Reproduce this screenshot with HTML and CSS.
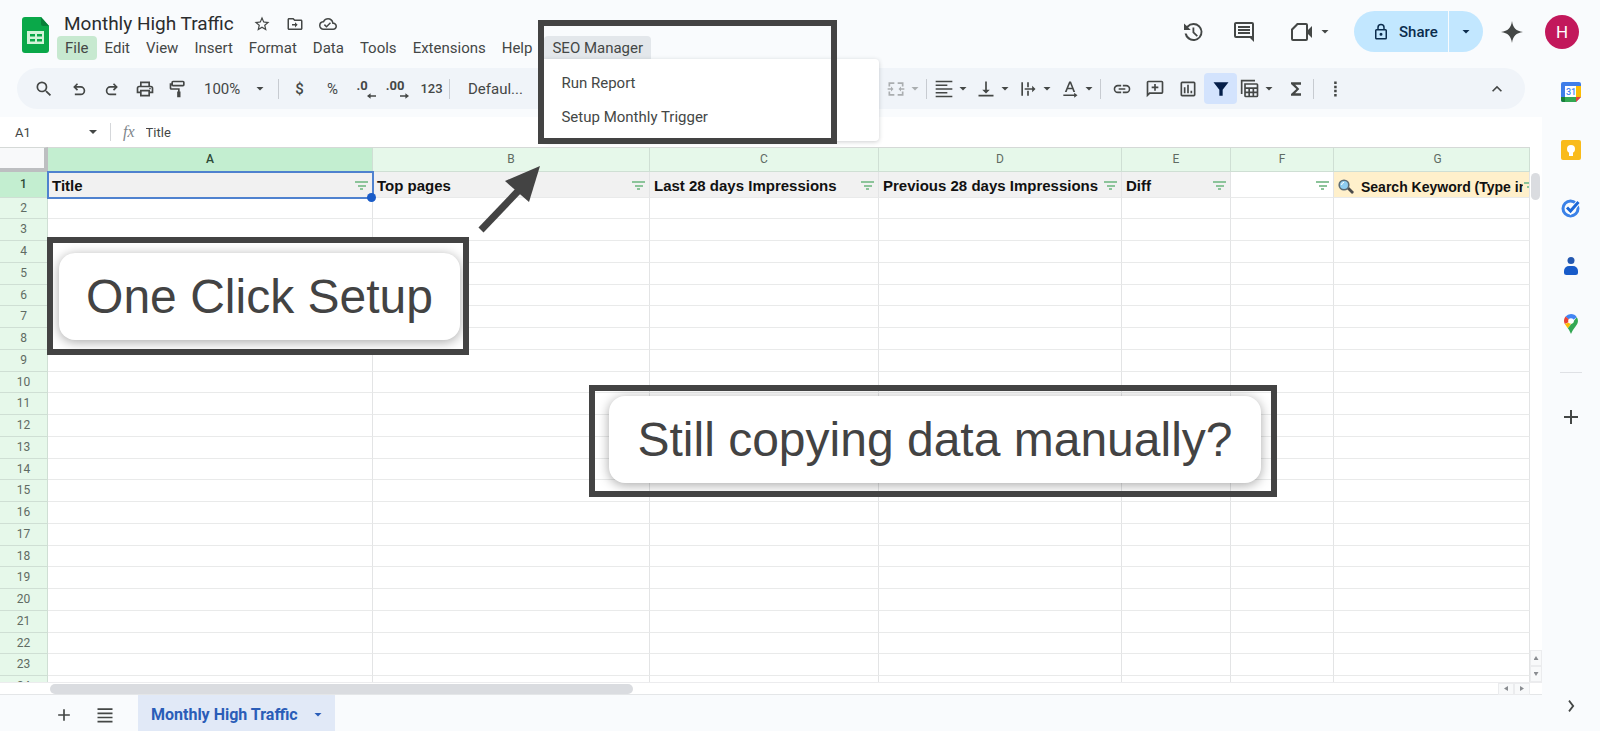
FILE: index.html
```html
<!DOCTYPE html>
<html lang="en">
<head>
    <meta charset="UTF-8">
    <meta name="viewport" content="width=device-width, initial-scale=1.0">
    <title>Monthly High Traffic</title>
    <link rel="stylesheet" href="styles.css">
</head>
<body>
    <div class="app">
        <header class="header">
            <svg class="logo" viewBox="0 0 27 36">
                <path d="M3 0h16l8 9v24a3 3 0 0 1-3 3H3a3 3 0 0 1-3-3V3a3 3 0 0 1 3-3z" fill="#0aa849"/>
                <path d="M19 0l8 9h-6a2 2 0 0 1-2-2z" fill="#078038"/>
                <path d="M5 14h17v13H5z" fill="#d3f3d8"/>
                <path d="M8 17h5v2.500H8zM15 17h5v2.500h-5zM8 22h5v2.500H8zM15 22h5v2.500h-5z" fill="#0aa849"/>
            </svg>
            <div class="heading">
                <div class="title-row">
                    <h1>Monthly High Traffic</h1>
                    <button aria-label="Star"><svg viewBox="0 0 24 24"><path d="M22 9.240l-7.190-.620L12 2 9.190 8.630 2 9.240l5.460 4.730L5.820 21 12 17.270 18.180 21l-1.630-7.030L22 9.240zM12 15.400l-3.760 2.270 1-4.280-3.320-2.880 4.380-.380L12 6.100l1.710 4.040 4.380.380-3.320 2.880 1 4.280L12 15.400z"/></svg></button>
                    <button aria-label="Move"><svg viewBox="0 0 24 24"><path d="M20 6h-8l-2-2H4c-1.100 0-2 .9-2 2v12c0 1.100.9 2 2 2h16c1.100 0 2-.9 2-2V8c0-1.100-.9-2-2-2zm0 12H4V6h5.170l2 2H20v10zM12 9.500l3.500 3.500-3.500 3.500v-2.500H8v-2h4z"/></svg></button>
                    <button aria-label="Saved"><svg viewBox="0 0 24 24"><path d="M19.350 10.040A7.490 7.490 0 0 0 12 4C9.110 4 6.600 5.640 5.350 8.040A5.994 5.994 0 0 0 0 14c0 3.310 2.690 6 6 6h13c2.760 0 5-2.240 5-5 0-2.640-2.050-4.780-4.650-4.960zM19 18H6c-2.210 0-4-1.790-4-4 0-2.050 1.530-3.760 3.560-3.970l1.070-.110.5-.950A5.469 5.469 0 0 1 12 6c2.620 0 4.880 1.860 5.390 4.430l.3 1.500 1.530.110A2.980 2.980 0 0 1 22 15c0 1.650-1.350 3-3 3zm-9-3.820l-2.090-2.090L6.500 13.500 10 17l6.010-6.010-1.410-1.410z"/></svg></button>
                </div>
                <nav class="menubar">
                    <button class="active">File</button>
                    <button>Edit</button>
                    <button>View</button>
                    <button>Insert</button>
                    <button>Format</button>
                    <button>Data</button>
                    <button>Tools</button>
                    <button>Extensions</button>
                    <button>Help</button>
                    <div class="menu-wrap">
                        <button class="open">SEO Manager</button>
                        <div class="menu">
                            <button>Run Report</button>
                            <button>Setup Monthly Trigger</button>
                        </div>
                        <div class="frame frame-menu"></div>
                    </div>
                </nav>
            </div>
            <div class="actions">
                <button aria-label="History"><svg viewBox="0 0 24 24"><path d="M12.500 3a9 9 0 1 1-8.900 10.500h2.100A7 7 0 1 0 7.200 7.500L9.500 9.800V10H3V3.500L5.800 6.100A9 9 0 0 1 12.500 3zM11.500 7.500h1.800v4.600l3.600 3.400-1.200 1.300-4.200-4z"/></svg></button>
                <button class="comments" aria-label="Comments"><svg viewBox="0 0 24 24"><path d="M22 22l-4-4H4a2 2 0 0 1-2-2V4c0-1.100.9-2 2-2h16a2 2 0 0 1 2 2zM4 4v12h16V4zM6 6h12v2H6zM6 9h12v2H6zM6 12h12v2H6z"/></svg></button>
                <button class="meet" aria-label="Meet">
                    <svg viewBox="0 0 24 24"><path d="M7 3h9a2 2 0 0 1 2 2v5l4-4v12l-4-4v5a2 2 0 0 1-2 2H3a2 2 0 0 1-2-2V9zM8 5L3 10v9h13V5z"/></svg>
                    <i class="caret"></i>
                </button>
                <div class="share">
                    <button class="share-main"><svg viewBox="0 0 24 24"><path d="M18 8h-1V6A5 5 0 0 0 7 6v2H6a2 2 0 0 0-2 2v10c0 1.100.9 2 2 2h12a2 2 0 0 0 2-2V10a2 2 0 0 0-2-2zM9 6a3 3 0 0 1 6 0v2H9zM18 20H6V10h12zM12 17a2 2 0 1 0 0-4 2 2 0 0 0 0 4z"/></svg>Share</button>
                    <button class="share-more" aria-label="Share options"><i class="caret"></i></button>
                </div>
                <button class="spark" aria-label="Gemini"><svg viewBox="0 0 24 24"><path d="M12 1c1 7 4 10 11 11-7 1-10 4-11 11-1-7-4-10-11-11 7-1 10-4 11-11z"/></svg></button>
                <button class="avatar">H</button>
            </div>
        </header>

        <div class="main">
            <div class="workspace">
                <div class="toolbar">
                    <button class="tool search" aria-label="Search"><svg viewBox="0 0 24 24"><path d="M15.500 14h-.790l-.280-.270A6.471 6.471 0 0 0 16 9.500 6.500 6.500 0 1 0 9.500 16c1.610 0 3.090-.590 4.230-1.570l.270.280v.790l5 4.990L20.490 19l-4.990-5zm-6 0C7.010 14 5 11.990 5 9.500S7.010 5 9.500 5 14 7.010 14 9.500 11.990 14 9.500 14z"/></svg></button>
                    <button class="tool" aria-label="Undo"><svg viewBox="0 0 24 24"><path d="M9.500 5L5 9.500 9.500 14l1.400-1.400-2.100-2.100H14a3.500 3.500 0 0 1 0 7H7v2h7a5.500 5.500 0 0 0 0-11H8.800l2.100-2.100z"/></svg></button>
                    <button class="tool" aria-label="Redo"><svg viewBox="0 0 24 24"><path d="M14.500 5L19 9.500 14.500 14l-1.400-1.400 2.100-2.100H10a3.500 3.500 0 0 0 0 7h7v2h-7a5.500 5.500 0 0 1 0-11h5.200l-2.100-2.100z"/></svg></button>
                    <button class="tool" aria-label="Print"><svg viewBox="0 0 24 24"><path d="M19 8h-1V3H6v5H5a3 3 0 0 0-3 3v6h4v4h12v-4h4v-6a3 3 0 0 0-3-3zM8 5h8v3H8zm8 14H8v-4h8zm4-4h-2v-2H6v2H4v-4a1 1 0 0 1 1-1h14a1 1 0 0 1 1 1z"/><circle cx="18" cy="11.500" r="1"/></svg></button>
                    <button class="tool" aria-label="Paint format"><svg viewBox="0 0 24 24"><path d="M18 2H6a2 2 0 0 0-2 2v3c0 1.100.9 2 2 2h12a2 2 0 0 0 2-2V4a2 2 0 0 0-2-2zm0 5H6V4h12zM4 5v0H2v6a2 2 0 0 0 2 2h8v2h-1v7h4v-7h-1v-4H4z"/></svg></button>
                    <button class="tool zoom">100%<i class="caret"></i></button>
                    <span class="sep"></span>
                    <button class="tool money">$</button>
                    <button class="tool">%</button>
                    <button class="tool decimal">.0<svg viewBox="0 0 10 6"><path d="M10 2.250H4V0L0 3l4 3V3.750h6z"/></svg></button>
                    <button class="tool decimal">.00<svg viewBox="0 0 10 6"><path d="M0 2.250h6V0l4 3-4 3V3.750H0z"/></svg></button>
                    <button class="tool number">123</button>
                    <span class="sep"></span>
                    <button class="tool font">Defaul...</button>
                    <div class="tools-right">
                        <button class="tool split disabled" aria-label="Merge"><svg viewBox="0 0 24 24"><path d="M3 4h7v2H5v3H3zM14 4h7v5h-2V6h-5zM3 15h2v3h5v2H3zM19 15h2v5h-7v-2h5zM2 11h4V9l3 3-3 3v-2H2zM22 11h-4V9l-3 3 3 3v-2h4z"/></svg><i class="caret"></i></button>
                        <span class="sep"></span>
                        <button class="tool split" aria-label="Align"><svg viewBox="0 0 24 24"><path d="M2 2h20v2H2zM2 6.500h14v2H2zM2 11h20v2H2zM2 15.500h14v2H2zM2 20h20v2H2z"/></svg><i class="caret"></i></button>
                        <button class="tool split" aria-label="Vertical align"><svg viewBox="0 0 24 24"><path d="M11 3h2v10h3.500L12 17.500 7.500 13H11zM3 19h18v2H3z"/></svg><i class="caret"></i></button>
                        <button class="tool split" aria-label="Wrap"><svg viewBox="0 0 24 24"><path d="M4 4h2v16H4zM11 4h2v6h-2zM11 14h2v6h-2zM8 11h9V8l4 4-4 4v-3H8z"/></svg><i class="caret"></i></button>
                        <button class="tool split" aria-label="Rotate"><svg viewBox="0 0 24 24"><path d="M11 3h2.200l5 12.500h-2.200l-1.200-3.200H9.200L8 15.500H5.800zm1.100 2.300L9.900 10.500h4.300zM4 18.500h13v-2l4 3-4 3v-2H4z"/></svg><i class="caret"></i></button>
                        <span class="sep"></span>
                        <button class="tool" aria-label="Link"><svg viewBox="0 0 24 24"><path d="M3.900 12c0-1.710 1.390-3.100 3.100-3.100h4V7H7a5 5 0 0 0 0 10h4v-1.900H7A3.100 3.100 0 0 1 3.900 12zM8 13h8v-2H8zm9-6h-4v1.900h4a3.100 3.100 0 0 1 0 6.200h-4V17h4a5 5 0 0 0 0-10z"/></svg></button>
                        <button class="tool" aria-label="Comment"><svg viewBox="0 0 24 24"><path d="M2 22V4c0-1.100.9-2 2-2h16a2 2 0 0 1 2 2v12a2 2 0 0 1-2 2H6zM4 17l1-1h15V4H4zM11 6h2v3h3v2h-3v3h-2v-3H8V9h3z"/></svg></button>
                        <button class="tool" aria-label="Chart"><svg viewBox="0 0 24 24"><path d="M19 3H5a2 2 0 0 0-2 2v14c0 1.100.9 2 2 2h14a2 2 0 0 0 2-2V5a2 2 0 0 0-2-2zm0 16H5V5h14zM7 10h2v7H7zM11 7h2v10h-2zM15 14h2v3h-2z"/></svg></button>
                        <button class="tool on" aria-label="Filter"><svg viewBox="0 0 24 24"><path d="M3 4h18l-7 9v7h-4v-7z"/></svg></button>
                        <button class="tool split" aria-label="Views"><svg viewBox="0 0 24 24"><path fill-rule="evenodd" d="M1 1h17v2H3v15H1zM5 5h15a2 2 0 0 1 2 2v13a2 2 0 0 1-2 2H7a2 2 0 0 1-2-2zm2 2v3h13V7zm0 5v3h3v-3zm5 0v3h3v-3zm5 0v3h3v-3zM7 17v3h3v-3zm5 0v3h3v-3zm5 0v3h3v-3z"/></svg><i class="caret"></i></button>
                        <button class="tool" aria-label="Functions"><svg viewBox="0 0 24 24"><path d="M18 4H6v2l6.500 6L6 18v2h12v-3h-7l5-5-5-5h7z"/></svg></button>
                        <span class="sep"></span>
                        <button class="tool" aria-label="More"><svg viewBox="0 0 24 24"><path d="M11 3h3v3h-3zM11 8h3v3h-3zM11 13h3v3h-3zM11 18h3v3h-3z"/></svg></button>
                    </div>
                    <button class="tool collapse" aria-label="Hide menus"><svg viewBox="0 0 24 24"><path d="M12 8l-6 6 1.400 1.400L12 10.800l4.600 4.600L18 14z"/></svg></button>
                </div>

                <div class="formula-bar">
                    <button class="name-box">A1<i class="caret"></i></button>
                    <span class="fx">fx</span>
                    <input class="formula" type="text" value="Title" aria-label="Formula">
                </div>

                <div class="sheet">
                    <div class="grid">
                        <table>
                            <colgroup>
                                <col class="col-num"><col class="col-a"><col class="col-b"><col class="col-c"><col class="col-d"><col class="col-e"><col class="col-f"><col>
                            </colgroup>
                            <thead>
                                <tr><th class="corner"></th><th class="current">A</th><th>B</th><th>C</th><th>D</th><th>E</th><th>F</th><th class="last">G</th></tr>
                            </thead>
                            <tbody id="rows">
                                <tr class="titles">
                                    <th class="current">1</th>
                                    <td class="selected"><div>Title<i class="filter"></i></div></td>
                                    <td><div>Top pages<i class="filter"></i></div></td>
                                    <td><div>Last 28 days Impressions<i class="filter"></i></div></td>
                                    <td><div>Previous 28 days Impressions<i class="filter"></i></div></td>
                                    <td><div>Diff<i class="filter"></i></div></td>
                                    <td class="blank"><div><i class="filter"></i></div></td>
                                    <td class="keyword"><div>
                                        <svg viewBox="0 0 16 16"><path d="M9 10l2-2 4.500 4.500a1.500 1.500 0 0 1-2 2z" fill="#4a4a4a"/><circle cx="6" cy="6" r="4.800" fill="#8fcdf0" stroke="#5b6b75" stroke-width="1.600"/><path d="M3.500 6A3 3 0 0 1 6 3.300" stroke="#fff" fill="none"/></svg>
                                        <span>Search Keyword (Type in</span><i class="filter"></i></div></td>
                                </tr>
                            </tbody>
                        </table>
                    </div>
                    <div class="vscroll">
                        <div class="vthumb"></div>
                        <button class="up" aria-label="Scroll up"></button>
                        <button class="down" aria-label="Scroll down"></button>
                    </div>
                    <div class="hscroll">
                        <div class="hthumb"></div>
                        <button class="left" aria-label="Scroll left"></button>
                        <button class="right" aria-label="Scroll right"></button>
                    </div>

                    <!-- callouts over the sheet -->
                    <div class="frame callout callout-setup"><p>One Click Setup</p></div>
                    <div class="frame callout callout-copy"><p>Still copying data manually?</p></div>
                    <svg class="arrow" viewBox="0 0 64 70"><path d="M4 66L44 24" stroke="#434343" stroke-width="7"/><path d="M63 2L28 17l24 21z" fill="#434343"/></svg>
                </div>

                <footer class="tabs">
                    <button class="add" aria-label="Add sheet"><svg viewBox="0 0 24 24"><path d="M11 5h2v6h6v2h-6v6h-2v-6H5v-2h6z"/></svg></button>
                    <button class="all" aria-label="All sheets"><svg viewBox="0 0 24 24"><path d="M3 4h18v2H3zM3 9h18v2H3zM3 14h18v2H3zM3 19h18v2H3z"/></svg></button>
                    <button class="tab">Monthly High Traffic<i class="caret"></i></button>
                </footer>
            </div>

            <aside class="side">
                <button aria-label="Calendar"><svg viewBox="0 0 20 20"><path d="M2 0h16a2 2 0 0 1 2 2v13l-5 5H2a2 2 0 0 1-2-2V2a2 2 0 0 1 2-2z" fill="#3f7de8"/><path d="M15 4h5v11h-5z" fill="#fbbc04"/><path d="M4 15h11v5H4z" fill="#34a853"/><path d="M0 15h4v5H2a2 2 0 0 1-2-2z" fill="#188038"/><path d="M15 15h5l-5 5z" fill="#ea4335"/><path d="M4 4h11v11H4z" fill="#fff"/><text class="cal-day" x="5" y="13">31</text></svg></button>
                <button aria-label="Keep"><svg viewBox="0 0 20 20"><rect width="20" height="20" rx="2" fill="#f9bb1b"/><circle cx="10" cy="9" r="4" fill="#fff"/><path d="M8 12h4v4H8z" fill="#fff"/></svg></button>
                <button aria-label="Tasks"><svg viewBox="0 0 20 20"><circle cx="9.500" cy="10.500" r="7.500" fill="none" stroke="#3b82e8" stroke-width="3"/><path d="M6 10l3.500 3.500L17.500 4" fill="none" stroke="#fff" stroke-width="5"/><path d="M6 9.500l3.500 3.500L17.500 4" fill="none" stroke="#1c68d8" stroke-width="3"/></svg></button>
                <button aria-label="Contacts"><svg viewBox="0 0 20 20"><circle cx="10" cy="4.500" r="3.500" fill="#2458b0"/><path d="M3 15a5 5 0 0 1 5-5h4a5 5 0 0 1 5 5v1.500a2.500 2.500 0 0 1-2.500 2.500h-9A2.500 2.500 0 0 1 3 16.500z" fill="#185bc9"/></svg></button>
                <button aria-label="Maps"><svg viewBox="0 0 20 20"><path d="M10 0a7 7 0 0 0-5.400 2.500L10 7.500l5.800-4.300A7 7 0 0 0 10 0z" fill="#4285f4"/><path d="M4.600 2.500A7 7 0 0 0 3.800 10L10 7z" fill="#ea4335"/><path d="M3.800 10c.8 1.500 1.900 2.700 3 4.200L12 7z" fill="#fbbc04"/><path d="M15.800 3.200c2.500 4.300.5 7-2 10.200-1.600 2-2.700 4-3.800 6.600-.9-2.200-1.800-4-3.200-5.800z" fill="#34a853"/><circle cx="10" cy="7" r="2.800" fill="#fff"/></svg></button>
                <hr>
                <button aria-label="Add-ons"><svg viewBox="0 0 20 20"><path d="M9 3h2v6h6v2h-6v6H9v-6H3V9h6z"/></svg></button>
                <button class="hide" aria-label="Hide side panel"><svg viewBox="0 0 24 24"><path d="M8 5l2-2 7 9-7 9-2-2 5.500-7z"/></svg></button>
            </aside>
        </div>
    </div>

    <script>
        // empty rows below the title row
        const rows = document.getElementById('rows');
        for (let i = 2; i <= 24; i++) {
            const tr = document.createElement('tr');
            tr.innerHTML = `<th>${i}</th>` + '<td></td>'.repeat(7);
            rows.appendChild(tr);
        }
    </script>
</body>
</html>
```
FILE: styles.css
```css
* {
    box-sizing: border-box;
}
body {
    margin: 0;
    font-family: Roboto, "Liberation Sans", sans-serif;
    font-size: 15px;
    color: #444746;
    background: #f9fbfd;
}
button {
    font: inherit;
    color: inherit;
    background: none;
    border: none;
    padding: 0;
    cursor: pointer;
}
svg {
    display: block;
    fill: currentColor;
}
.app {
    display: flex;
    flex-direction: column;
    height: 100vh;
    overflow: hidden;
}
.caret {
    flex: none;
    width: 8px;
    height: 4px;
    background: currentColor;
    clip-path: polygon(0 0, 100% 0, 50% 100%);
}

/* header */
.header {
    display: flex;
    align-items: flex-start;
    height: 68px;
    flex: none;
    padding: 11px 21px 0 22px;
}
.logo {
    width: 27px;
    height: 36px;
    margin-top: 6px;
}
.heading {
    margin-left: 8px;
}
.title-row {
    display: flex;
    align-items: center;
    gap: 13px;
    height: 25px;
    padding-left: 7px;
}
.title-row h1 {
    margin: 0 5px 0 0;
    font-size: 19px;
    line-height: 24px;
    font-weight: 400;
    color: #2b2d2e;
}
.title-row svg {
    width: 20px;
    height: 18px;
}
.menubar {
    display: flex;
}
.menubar button {
    height: 24px;
    padding: 0 8px;
    border-radius: 4px;
    line-height: 24px;
    white-space: nowrap;
}
.menubar .active {
    background: #c7e9d0;
}
.menu-wrap {
    position: relative;
    margin-left: 4px;
}
.menubar .open {
    background: #e3e7eb;
    border-radius: 4px 4px 0 0;
}
.menu {
    position: absolute;
    z-index: 3;
    top: 23px;
    left: 0;
    width: 335px;
    padding: 7px 0;
    background: #fff;
    border-radius: 0 4px 4px 4px;
    box-shadow: 0 1px 4px rgba(60, 64, 67, 0.25);
}
.menubar .menu button {
    display: block;
    width: 100%;
    height: 34px;
    padding: 0 17px;
    line-height: 34px;
    text-align: left;
}
.frame {
    position: absolute;
    z-index: 4;
    border: 6px solid #434343;
}
.frame-menu {
    top: -16px;
    left: -6px;
    width: 299px;
    height: 124px;
}
.actions {
    display: flex;
    align-items: center;
    margin-left: auto;
    height: 41px;
}
.actions svg {
    width: 24px;
    height: 24px;
}
.actions > button {
    margin-right: 27px;
}
.actions .comments {
    margin-right: 34px;
}
.actions .meet {
    display: flex;
    align-items: center;
    gap: 7px;
    margin-right: 25px;
}
.meet svg {
    fill-rule: evenodd;
}
.share {
    display: flex;
    height: 41px;
    margin-right: 17px;
    border-radius: 21px;
    overflow: hidden;
    color: #0b2c4d;
}
.share button {
    background: #c2e7ff;
}
.share-main {
    display: flex;
    align-items: center;
    gap: 9px;
    width: 94px;
    padding-left: 18px;
}
.share .share-main {
    font-weight: 500;
}
.share-main svg {
    width: 18px;
    height: 18px;
}
.share-more {
    display: flex;
    align-items: center;
    justify-content: center;
    width: 34px;
    margin-left: 1px;
}
.actions .spark {
    margin-right: 21px;
}
.actions .avatar {
    width: 34px;
    height: 34px;
    margin: 0;
    border-radius: 50%;
    background: #c2185b;
    color: #fff;
    font-size: 17px;
}

/* layout below header */
.main {
    display: flex;
    flex: 1;
    min-height: 0;
}
.workspace {
    display: flex;
    flex-direction: column;
    flex: 1;
    min-width: 0;
}

/* toolbar */
.toolbar {
    display: flex;
    align-items: center;
    flex: none;
    height: 41px;
    margin: 0 17px;
    padding: 0 12px 0 9px;
    border-radius: 21px;
    background: #f0f4f9;
}
.tool {
    display: flex;
    align-items: center;
    justify-content: center;
    flex: none;
    width: 33px;
    height: 31px;
}
.tool svg {
    width: 20px;
    height: 20px;
}
.search {
    width: 36px;
}
.zoom {
    width: 83px;
    padding: 0 13px 0 10px;
    justify-content: space-between;
}
.money {
    font-weight: 500;
}
.decimal {
    position: relative;
    align-items: flex-start;
    padding: 5px 7px 0 0;
    font-size: 13px;
    font-weight: 700;
}
.decimal svg {
    position: absolute;
    right: 6px;
    bottom: 5px;
    width: 9px;
    height: 6px;
}
.number {
    font-size: 13px;
    font-weight: 500;
}
.font {
    width: auto;
    padding-left: 14px;
}
.sep {
    flex: none;
    width: 1px;
    height: 20px;
    margin: 0 4px 0 1px;
    background: #c7cbd1;
}
.tools-right {
    display: flex;
    align-items: center;
    margin-left: auto;
}
.split {
    width: 42px;
    justify-content: flex-start;
    gap: 5px;
    padding-left: 3px;
}
.disabled {
    opacity: 0.4;
}
.on {
    border-radius: 4px;
    background: #d3e3fd;
    color: #041e49;
}
.collapse {
    margin-left: 129px;
}

/* formula bar */
.formula-bar {
    display: flex;
    align-items: center;
    flex: none;
    height: 30px;
    margin-top: 8px;
    background: #fff;
    font-size: 13px;
}
.name-box {
    display: flex;
    align-items: center;
    justify-content: space-between;
    width: 111px;
    height: 18px;
    padding: 0 13px 0 15px;
    border-right: 1px solid #d5d7da;
}
.fx {
    padding-left: 12px;
    font-family: "Liberation Serif", serif;
    font-style: italic;
    font-size: 16px;
    color: #80868b;
}
.formula {
    flex: 1;
    min-width: 0;
    border: none;
    padding: 0 11px;
    background: none;
    font: inherit;
    color: inherit;
}

/* sheet */
.sheet {
    position: relative;
    display: grid;
    grid-template-columns: 1fr 12px;
    grid-template-rows: 1fr 13px;
    flex: 1;
    min-height: 0;
    background: #fff;
}
.grid {
    min-height: 0;
    overflow: hidden;
}
table {
    width: 100%;
    table-layout: fixed;
    border-collapse: separate;
    border-spacing: 0;
}
.col-num {
    width: 48px;
}
.col-a {
    width: 325px;
}
.col-b {
    width: 277px;
}
.col-c {
    width: 229px;
}
.col-d {
    width: 243px;
}
.col-e {
    width: 109px;
}
.col-f {
    width: 103px;
}
th,
td {
    height: 22px;
    padding: 0;
    border-right: 1px solid #e3e4e5;
    border-bottom: 1px solid #e9eaea;
}
tbody tr:nth-child(4n + 2) > * {
    height: 21px;
}
th {
    background: #e6f8ea;
    border-color: #cfdfd4;
    color: #5f6b63;
    font-size: 12px;
    line-height: 20px;
    font-weight: 400;
    vertical-align: top;
}
thead th {
    height: 25px;
    border-top: 1px solid #d5d9d7;
    line-height: 23px;
}
thead .last {
    padding-left: 12px;
}
thead .corner {
    background: #f8f9fa;
    border-right: 4px solid #bdbfc1;
    border-bottom: 4px solid #bdbfc1;
}
th.current {
    background: #c3eed0;
    color: #2c4a36;
    font-weight: 500;
}
.titles > * {
    height: 25px;
}
.titles th {
    line-height: 25px;
}
.titles td {
    background: #f1f1f1;
    color: #111;
    font: bold 15px/20px "Liberation Sans", Arial, sans-serif;
    white-space: nowrap;
}
.titles td div {
    display: flex;
    align-items: center;
    height: 24px;
    padding: 2px 4px 0;
    overflow: hidden;
}
.titles .selected {
    position: relative;
    outline: 2px solid #4f82cf;
    outline-offset: -1px;
}
.titles .selected::after {
    content: "";
    position: absolute;
    right: -4px;
    bottom: -5px;
    width: 9px;
    height: 9px;
    border-radius: 50%;
    background: #1a5cc8;
}
.filter {
    flex: none;
    width: 13px;
    height: 9px;
    margin-left: auto;
    background: linear-gradient(#8cc49a, #8cc49a) center 0 / 13px 2px no-repeat,
        linear-gradient(#8cc49a, #8cc49a) center 4px / 8px 2px no-repeat,
        linear-gradient(#8cc49a, #8cc49a) center 7px / 3px 2px no-repeat;
}
.titles .blank {
    background: #fff;
}
.titles .keyword {
    background: #fff0cb;
    font-size: 14px;
}
.keyword svg {
    flex: none;
    width: 16px;
    height: 16px;
    margin-right: 7px;
}
.keyword span {
    width: 162px;
    overflow: hidden;
}
.titles .keyword div {
    padding: 4px 0 0 4px;
}
.keyword .filter {
    width: 5px;
    margin-left: 1px;
    background-position: 0 0, 3px 4px, 5px 7px;
}
.vscroll {
    display: flex;
    flex-direction: column;
    padding-top: 26px;
}
.vthumb {
    width: 9px;
    height: 27px;
    margin: 0 1px auto;
    border-radius: 5px;
    background: #dadce0;
}
.vscroll button,
.hscroll button {
    display: flex;
    align-items: center;
    justify-content: center;
    height: 16px;
    border: 1px solid #ebecee;
    background: #f8f9fa;
}
.vscroll button::before,
.hscroll button::before {
    content: "";
    width: 5px;
    height: 4px;
    background: #8a8d91;
    clip-path: polygon(50% 0, 100% 100%, 0 100%);
}
.vscroll .down::before {
    clip-path: polygon(0 0, 100% 0, 50% 100%);
}
.hscroll {
    display: flex;
    align-items: center;
    grid-column: 1 / 3;
    padding: 0 12px 0 50px;
    border-top: 1px solid #ececee;
    border-bottom: 1px solid #e4e6e8;
}
.hthumb {
    width: 583px;
    height: 10px;
    margin-right: auto;
    border-radius: 5px;
    background: #dadce0;
}
.hscroll button {
    width: 16px;
    height: 12px;
}
.hscroll .left::before {
    width: 4px;
    height: 5px;
    clip-path: polygon(0 50%, 100% 0, 100% 100%);
}
.hscroll .right::before {
    width: 4px;
    height: 5px;
    clip-path: polygon(0 0, 100% 50%, 0 100%);
}

/* callouts */
.callout {
    overflow: hidden;
}
.callout p {
    margin: 0;
    border-radius: 16px;
    background: #fff;
    box-shadow: 0 2px 12px rgba(0, 0, 0, 0.35);
    color: #434343;
    font: 48px/87px "Liberation Sans", Arial, sans-serif;
    text-align: center;
    white-space: nowrap;
}
.callout-setup {
    top: 90px;
    left: 47px;
    width: 422px;
    height: 118px;
    padding: 10px 3px 0 6px;
    background: #fff;
}
.callout-copy {
    top: 238px;
    left: 589px;
    width: 688px;
    height: 112px;
    padding: 5px 10px 0 14px;
}
.arrow {
    position: absolute;
    z-index: 4;
    top: 17px;
    left: 477px;
    width: 64px;
    height: 70px;
}

/* sheet tabs */
.tabs {
    display: flex;
    align-items: center;
    flex: none;
    height: 36px;
    padding-left: 54px;
}
.tabs svg {
    width: 20px;
    height: 20px;
}
.tabs .add,
.tabs .all {
    padding-top: 3px;
}
.tabs .all {
    margin: 0 23px 0 21px;
}
.tab {
    display: flex;
    align-items: center;
    justify-content: space-between;
    gap: 12px;
    min-width: 197px;
    height: 36px;
    padding: 3px 13px 0;
    background: #e1e9f7;
    color: #2a5db8;
    font-size: 16px;
    font-weight: 700;
}

/* side panel */
.side {
    display: flex;
    flex-direction: column;
    align-items: center;
    flex: none;
    gap: 38px;
    width: 58px;
    padding: 14px 0 17px;
}
.side svg {
    width: 20px;
    height: 20px;
}
.side hr {
    width: 22px;
    margin: 0 0 -4px;
    border: none;
    border-top: 1px solid #dfe1e5;
}
.side .hide {
    margin-top: auto;
}
.side .hide svg {
    width: 16px;
    height: 16px;
}
.cal-day {
    font: 500 9px Roboto, sans-serif;
    fill: #4285f4;
}
```
